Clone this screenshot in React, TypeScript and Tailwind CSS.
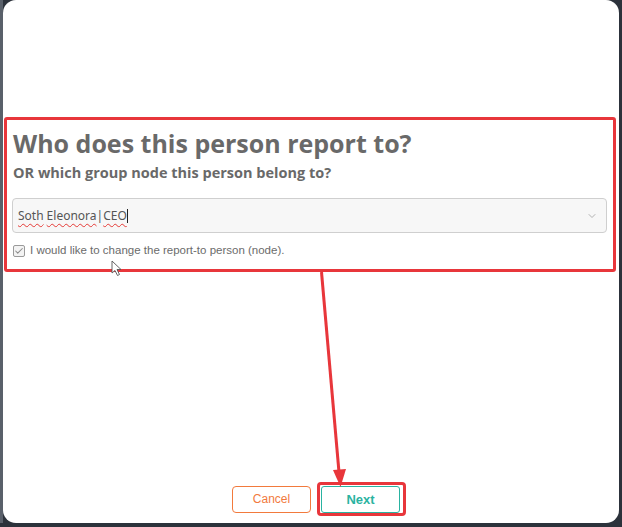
import { ChevronDown, Check } from 'lucide-react';

function Annotations() {
  return (
    <svg
      className="absolute left-0 top-0 pointer-events-none"
      width={622}
      height={527}
      viewBox="0 0 622 527"
    >
      {/* red arrow from section box to Next */}
      <line x1={321.5} y1={272} x2={339.5} y2={478} stroke="#e8363b" strokeWidth={3} />
      <polygon points="333,470 346,469 340.5,487" fill="#e8363b" />
      {/* mouse pointer */}
      <path
        d="M112 261 L112 273 L115 270.5 L117.5 275.5 L119.5 274.5 L117 269.5 L121 269.5 Z"
        fill="#fff"
        stroke="#555"
        strokeWidth={0.9}
        strokeLinejoin="round"
      />
    </svg>
  );
}

export default function App() {
  return (
    <div className="relative w-[622px] h-[527px] bg-[#2c323b] flex overflow-hidden">
      <div className="w-[3px] h-[523px] bg-[#59606a]" />
      <div className="w-[616px] h-[523px] bg-white rounded-[13px] flex flex-col">
        <div className="h-[117px]" />

        <div className="ml-[1px] mr-[3px] h-[155px] border-[3px] border-[#e8363b] rounded-[3px] pl-[5px] pr-[6px] pt-[8px]">
          <h1
            className="text-[25px] leading-[30px] font-bold text-[#696969] pl-[1px]"
            style={{ fontFamily: '"Open Sans", "Noto Sans", sans-serif' }}
          >
            Who does this person report to?
          </h1>
          <h2
            className="mt-[5px] text-[14.5px] leading-[20px] font-bold text-[#696969] pl-[1px]"
            style={{ fontFamily: '"Open Sans", "Noto Sans", sans-serif' }}
          >
            OR which group node this person belong to?
          </h2>

          <div className="mt-[15px] h-[35px] bg-[#f7f7f7] border border-[#cfcfcf] rounded-[4px] flex items-center pl-[5px] pr-[8px]">
            <span
              className="flex-1 text-[12px] text-[#555] flex items-center"
              style={{ fontFamily: '"Noto Sans", "Open Sans", sans-serif' }}
            >
              <span className="underline decoration-wavy decoration-[#e53935] decoration-[1px] underline-offset-[3px]">Soth</span>
              <span className="ml-[3px] underline decoration-wavy decoration-[#e53935] decoration-[1px] underline-offset-[3px]">Eleonora</span>
              <span>|</span>
              <span className="underline decoration-wavy decoration-[#e53935] decoration-[1px] underline-offset-[3px]">CEO</span>
              <span className="w-[1px] h-[14px] bg-[#222]" />
            </span>
            <ChevronDown size={12} strokeWidth={1.5} className="text-[#999]" />
          </div>

          <label className="mt-[9px] flex items-center gap-[5px] pl-[1px]">
            <span className="w-[12px] h-[12px] border border-[#9a9a9a] rounded-[2px] bg-[#f3f3f3] flex items-center justify-center">
              <Check size={10} strokeWidth={2.5} className="text-[#8a8a8a]" />
            </span>
            <span
              className="text-[11.5px] text-[#6b6b6b]"
              style={{ fontFamily: '"Liberation Sans", Arial, sans-serif' }}
            >
              I would like to change the report-to person (node).
            </span>
          </label>
        </div>

        <div className="flex-1" />

        <div className="flex items-start pl-[229px] pb-[7px]">
          <button
            className="mt-[4px] w-[79px] h-[27px] border border-[#f27a3d] rounded-[4px] text-[12px] text-[#f27a3d] bg-white"
            style={{ fontFamily: '"Liberation Sans", Arial, sans-serif' }}
          >
            Cancel
          </button>
          <div className="ml-[6px] border-[3px] border-[#e8363b] rounded-[4px] pl-[1px] pr-[3px] pt-[1px]">
            <button
              className="w-[79px] h-[27px] border border-[#2ab3a1] rounded-[3px] text-[13px] font-bold text-[#2ab3a1] bg-white"
              style={{ fontFamily: '"Liberation Sans", Arial, sans-serif' }}
            >
              Next
            </button>
          </div>
        </div>
      </div>
      <div className="w-[3px] h-[527px] bg-[#2c323b]" />
      <Annotations />
    </div>
  );
}
